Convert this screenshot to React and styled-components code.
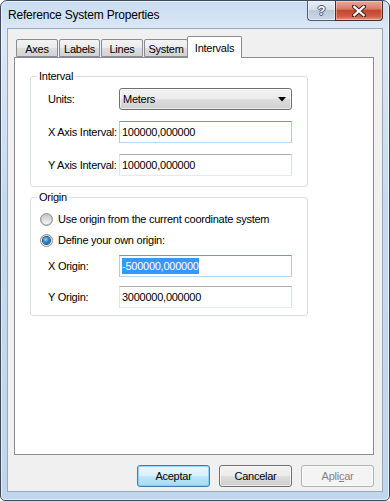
import React from "react"
import styled, { createGlobalStyle } from "styled-components"

const GlobalStyle = createGlobalStyle`
  html, body {
    margin: 0;
    padding: 0;
    background: #ffffff;
  }
  body {
    font-family: "Liberation Sans", Arial, sans-serif;
    font-size: 11px;
    letter-spacing: -0.25px;
    color: #000;
  }
  * {
    box-sizing: border-box;
  }
`

const Window = styled.div`
  width: 390px;
  height: 501px;
  display: flex;
  flex-direction: column;
  border: 1px solid #3b4a5e;
  border-radius: 7px 7px 5px 5px;
  overflow: hidden;
  background: linear-gradient(
    to bottom,
    #c9dcf0 0%,
    #dbe8f6 6%,
    #c6daef 40%,
    #c0d6ed 100%
  );
  box-shadow: inset 0 0 0 1px rgba(255, 255, 255, 0.55);
`

const TitleBar = styled.div`
  height: 27px;
  display: flex;
  align-items: flex-start;
  padding-left: 7px;
`

const Title = styled.div`
  font-size: 12px;
  letter-spacing: -0.2px;
  line-height: 28px;
  color: #000;
`

const CaptionButtons = styled.div`
  margin-left: auto;
  margin-right: 6px;
  display: flex;
`

const HelpButton = styled.div`
  width: 28px;
  height: 20px;
  border: 1px solid #4f5c6f;
  border-top: none;
  border-right: none;
  border-radius: 0 0 0 4px;
  background: linear-gradient(
    to bottom,
    #e6edf6 0%,
    #d3deeb 45%,
    #b9c9dc 50%,
    #c9d7e7 100%
  );
  box-shadow: inset 0 0 0 1px rgba(255, 255, 255, 0.5);
  display: flex;
  align-items: center;
  justify-content: center;
  color: #fff;
  font-weight: bold;
  font-size: 13px;
  letter-spacing: 0;
  text-shadow: -1px 0 #44505f, 1px 0 #44505f, 0 -1px #44505f, 0 1px #44505f;
`

const CloseButton = styled.div`
  width: 48px;
  height: 20px;
  border: 1px solid #4e2a25;
  border-top: none;
  border-radius: 0 0 4px 0;
  background: linear-gradient(
    to bottom,
    #e9a99b 0%,
    #d97b68 42%,
    #c44730 50%,
    #cf5a43 80%,
    #e39481 100%
  );
  box-shadow: inset 0 0 0 1px rgba(255, 255, 255, 0.35);
  display: flex;
  align-items: center;
  justify-content: center;
`

const Client = styled.div`
  flex: 1;
  margin: 0 6px 8px 6px;
  border: 1px solid #98a9bd;
  background: #f0f0f0;
  display: flex;
  flex-direction: column;
  padding: 8px 8px 4px 6px;
`

const TabStrip = styled.div`
  height: 20px;
  display: flex;
  align-items: flex-end;
  gap: 1px;
  padding-left: 2px;
`

const Tab = styled.div`
  position: relative;
  z-index: ${(p) => (p.$active ? 1 : 0)};
  width: ${(p) => p.$w}px;
  height: ${(p) => (p.$active ? 22 : 18)}px;
  margin-bottom: ${(p) => (p.$active ? -1 : 0)}px;
  margin-left: ${(p) => (p.$active ? -2 : 0)}px;
  border: 1px solid #898c95;
  border-bottom: ${(p) => (p.$active ? "none" : "1px solid #898c95")};
  border-radius: 2px 2px 0 0;
  background: ${(p) =>
    p.$active
      ? "#ffffff"
      : "linear-gradient(to bottom, #f3f3f3 0%, #ebebeb 50%, #dddddd 51%, #d3d3d3 100%)"};
  display: flex;
  align-items: center;
  justify-content: center;
  padding-top: ${(p) => (p.$active ? 0 : 1)}px;
  font-size: 11px;
`

const Panel = styled.div`
  flex: 1;
  border: 1px solid #898c95;
  background: #ffffff;
  display: flex;
  flex-direction: column;
  gap: 4px;
  padding: 12px 0 0 15px;
`

const GroupBox = styled.fieldset`
  width: 278px;
  margin: 0;
  padding: 0;
  border: 1px solid #d5dfe5;
  border-radius: 3px;
  min-inline-size: 0;
`

const Legend = styled.legend`
  margin-left: 6px;
  padding: 0 2px;
  line-height: 13px;
  font-size: 11px;
`

const FieldGrid = styled.div`
  display: grid;
  grid-template-columns: 71px 173px;
  align-items: center;
  row-gap: ${(p) => p.$gap}px;
  padding: ${(p) => p.$pad};
`

const Label = styled.div`
  white-space: nowrap;
`

const ComboBox = styled.div`
  height: 22px;
  border: 1px solid #707070;
  border-radius: 3px;
  background: linear-gradient(
    to bottom,
    #f2f2f2 0%,
    #ebebeb 50%,
    #dddddd 51%,
    #cfcfcf 100%
  );
  box-shadow: inset 0 0 0 1px rgba(255, 255, 255, 0.6);
  display: flex;
  align-items: center;
  justify-content: space-between;
  padding: 0 5px 0 3px;
`

const TextBox = styled.div`
  height: 22px;
  border: 1px solid;
  border-color: ${(p) =>
    p.$focused
      ? "#5a9fd6 #a9cdea #b5d6ef #a9cdea"
      : "#abadb3 #dbdfe6 #e3e9ef #e2e3ea"};
  background: #ffffff;
  display: flex;
  align-items: center;
  padding: 0 2px;
  white-space: nowrap;
  overflow: hidden;
`

const Selected = styled.span`
  background: #3399ff;
  color: #ffffff;
  line-height: 16px;
`

const OriginBody = styled.div`
  padding: 8px 0 7px 9px;
`

const RadioList = styled.div`
  display: flex;
  flex-direction: column;
  gap: 7px;
`

const RadioRow = styled.div`
  height: 14px;
  display: flex;
  align-items: center;
  gap: 5px;
`

const Radio = styled.span`
  position: relative;
  width: 13px;
  height: 13px;
  border-radius: 50%;
  border: 1px solid #8a8c8e;
  background: linear-gradient(to bottom, #dcdcdc, #fbfbfb);
  display: flex;
  align-items: center;
  justify-content: center;
  flex-shrink: 0;

  &::after {
    content: "";
    width: ${(p) => (p.$checked ? 7 : 9)}px;
    height: ${(p) => (p.$checked ? 7 : 9)}px;
    border-radius: 50%;
    background: ${(p) =>
      p.$checked
        ? "radial-gradient(circle at 40% 35%, #8bd7f7 0%, #2a86c8 45%, #0c3f6c 100%)"
        : "linear-gradient(to bottom, #c9c9c9, #f4f4f4)"};
    box-shadow: ${(p) =>
      p.$checked ? "0 0 0 1px #1d4d79" : "0 0 0 1px rgba(150,150,150,0.5)"};
  }
`

const Footer = styled.div`
  height: 22px;
  margin-top: 10px;
  display: flex;
  justify-content: flex-end;
  gap: 9px;
`

const Button = styled.div`
  width: 73px;
  height: 22px;
  border: 1px solid
    ${(p) => (p.$default ? "#3c7fb1" : p.$disabled ? "#adb2b5" : "#707070")};
  border-radius: 3px;
  background: ${(p) =>
    p.$default
      ? "linear-gradient(to bottom, #eaf6fd 0%, #d9f0fc 50%, #bee6fd 51%, #a7d9f5 100%)"
      : p.$disabled
      ? "#f4f4f4"
      : "linear-gradient(to bottom, #f2f2f2 0%, #ebebeb 50%, #dddddd 51%, #cfcfcf 100%)"};
  box-shadow: inset 0 0 0 1px
    ${(p) => (p.$default ? "rgba(120, 200, 240, 0.7)" : "rgba(255, 255, 255, 0.6)")};
  color: ${(p) => (p.$disabled ? "#838383" : "#000")};
  display: flex;
  align-items: center;
  justify-content: center;
  font-size: 11px;
`

const tabs = [
  { name: "Axes", w: 42 },
  { name: "Labels", w: 41 },
  { name: "Lines", w: 42 },
  { name: "System", w: 44 },
  { name: "Intervals", w: 55, active: true },
]

const CloseGlyph = () => (
  <svg width="14" height="12" viewBox="0 0 14 12">
    <path d="M2 1.5 L12 10.5 M12 1.5 L2 10.5" stroke="#4a2420" strokeWidth="4.2" strokeLinecap="square" />
    <path d="M2.3 1.8 L11.7 10.2 M11.7 1.8 L2.3 10.2" stroke="#ffffff" strokeWidth="2.2" strokeLinecap="square" />
  </svg>
)

const DropArrow = () => (
  <svg width="8" height="5" viewBox="0 0 8 5">
    <path d="M0 0 H8 L4 4.5 Z" fill="#000" />
  </svg>
)

const App = () => {
  return (
    <>
      <GlobalStyle />
      <Window>
        <TitleBar>
          <Title>Reference System Properties</Title>
          <CaptionButtons>
            <HelpButton>?</HelpButton>
            <CloseButton>
              <CloseGlyph />
            </CloseButton>
          </CaptionButtons>
        </TitleBar>
        <Client>
          <TabStrip>
            {tabs.map((t) => (
              <Tab key={t.name} $w={t.w} $active={t.active}>
                {t.name}
              </Tab>
            ))}
          </TabStrip>
          <Panel>
            <GroupBox>
              <Legend>Interval</Legend>
              <FieldGrid $gap={11} $pad="5px 0 10px 17px">
                <Label>Units:</Label>
                <ComboBox>
                  <span>Meters</span>
                  <DropArrow />
                </ComboBox>
                <Label>X Axis Interval:</Label>
                <TextBox $focused>100000,000000</TextBox>
                <Label>Y Axis Interval:</Label>
                <TextBox>100000,000000</TextBox>
              </FieldGrid>
            </GroupBox>
            <GroupBox>
              <Legend>Origin</Legend>
              <OriginBody>
                <RadioList>
                  <RadioRow>
                    <Radio />
                    <span>Use origin from the current coordinate system</span>
                  </RadioRow>
                  <RadioRow>
                    <Radio $checked />
                    <span>Define your own origin:</span>
                  </RadioRow>
                </RadioList>
                <FieldGrid $gap={9} $pad="8px 0 0 8px">
                  <Label>X Origin:</Label>
                  <TextBox $focused>
                    <Selected>-500000,000000</Selected>
                  </TextBox>
                  <Label>Y Origin:</Label>
                  <TextBox>3000000,000000</TextBox>
                </FieldGrid>
              </OriginBody>
            </GroupBox>
          </Panel>
          <Footer>
            <Button $default>Aceptar</Button>
            <Button>Cancelar</Button>
            <Button $disabled>
              Apli<u>c</u>ar
            </Button>
          </Footer>
        </Client>
      </Window>
    </>
  )
}

export default App
